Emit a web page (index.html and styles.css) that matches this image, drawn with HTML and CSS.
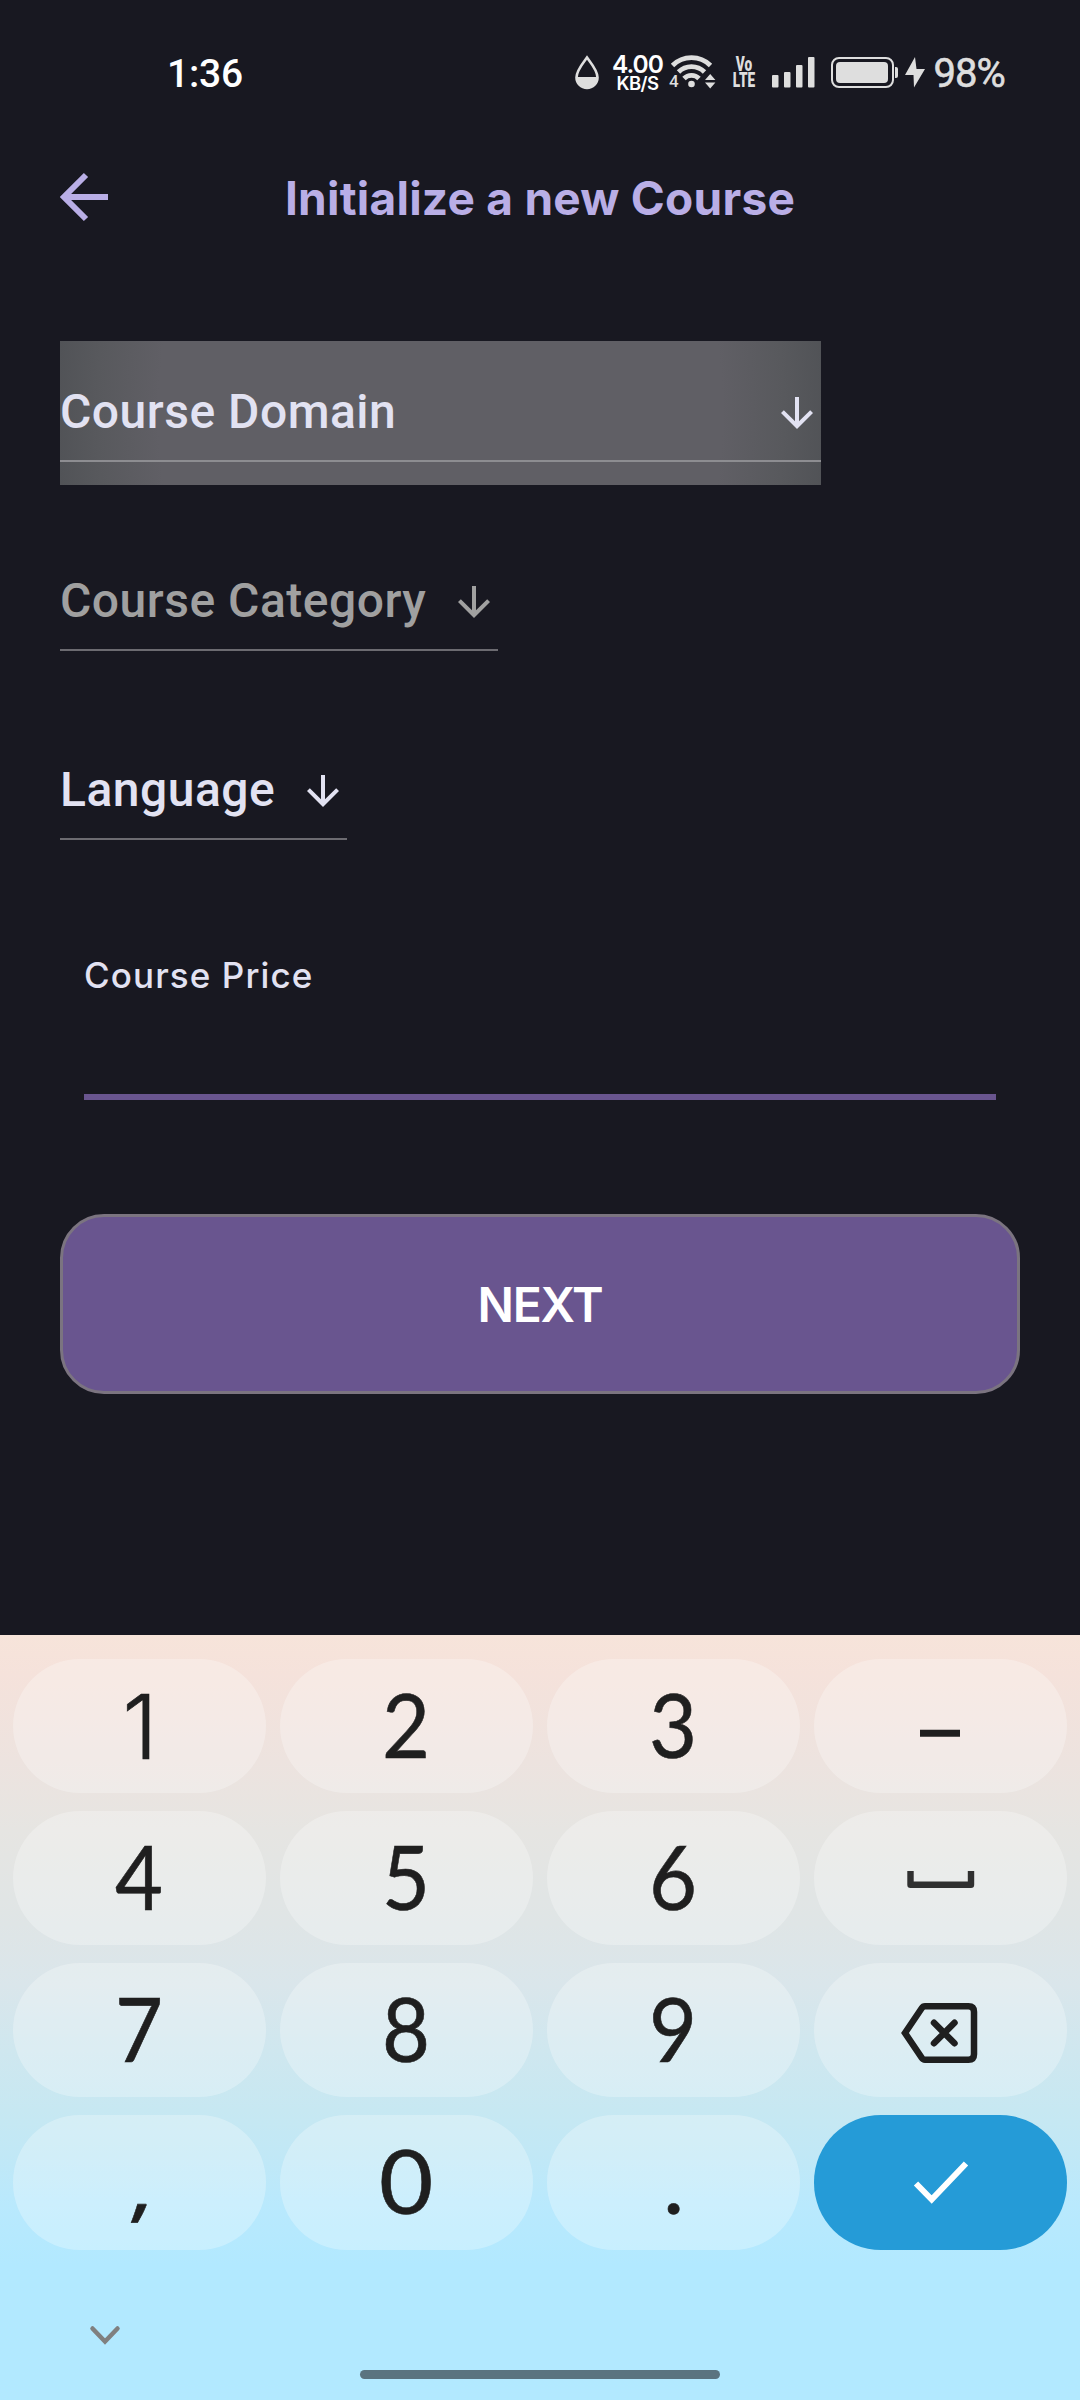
FILE: index.html
```html
<!DOCTYPE html>
<html lang="en">
<head>
<meta charset="utf-8">
<title>Initialize a new Course</title>
<link rel="stylesheet" href="styles.css">
</head>
<body>
<div class="screen">
  <header class="status">
    <span class="time">1:36</span>
    <div class="indicators">
      <svg class="drop" width="26" height="35" viewBox="0 0 26 35"><path d="M13 2.5C10 7 2.5 15 2.5 22.5a10.500 10.500 0 0 0 21 0C23.500 15 16 7 13 2.500z" fill="none" stroke="#dedede" stroke-width="2.600"/><path d="M2 22h22a11 11 0 0 1-22 0z" fill="#dedede"/></svg>
      <div class="speed"><span class="rate">4.00</span><span class="unit">KB/S</span></div>
      <svg class="wifi" width="48" height="36" viewBox="0 0 48 36"><g fill="none" stroke="#dedede" stroke-width="4.800"><path d="M3.500 12.500a27 27 0 0 1 38 0"/><path d="M9.500 19a18.500 18.500 0 0 1 26 0"/><path d="M15 25.500a10.500 10.500 0 0 1 15 0"/></g><circle cx="22.500" cy="31" r="3.300" fill="#dedede"/><path d="M36 27l5.200-6 5.200 6zM36 29.500h10.400l-5.200 6z" fill="#dedede"/><text class="wifi-gen" x="0" y="34">4</text></svg>
      <div class="volte"><span>Vo</span><span>LTE</span></div>
      <svg class="signal" width="44" height="31" viewBox="0 0 44 31" fill="#dedede"><rect x="0" y="18" width="6.500" height="12.500" rx="1"/><rect x="12" y="15" width="6.500" height="15.500" rx="1"/><rect x="24" y="8" width="6.500" height="22.500" rx="1"/><rect x="36" y="0" width="6.500" height="30.500" rx="1"/></svg>
      <svg class="battery" width="68" height="31" viewBox="0 0 68 31"><rect x="1" y="1" width="61" height="29" rx="7" fill="none" stroke="#dedede" stroke-width="2"/><rect x="5" y="5" width="52" height="21" rx="4" fill="#dedede"/><path d="M64 10h1q2 0 2 2v7q0 2-2 2h-1z" fill="#dedede"/></svg>
      <svg class="bolt" width="20" height="31" viewBox="0 0 20 31"><path d="M10 0L0 18h8.500L9 30.500 20 12h-8.500z" fill="#dedede"/></svg>
      <span class="percent">98%</span>
    </div>
  </header>

  <nav class="appbar">
    <svg class="back" width="48" height="48" viewBox="0 0 48 48"><path d="M26 2L4 24l22 22M4 24h44" fill="none" stroke="#b9aee6" stroke-width="6"/></svg>
    <h1 class="title">Initialize a new Course</h1>
  </nav>

  <main class="form">
    <div class="select focused"><span>Course Domain</span><svg width="48" height="48" viewBox="0 0 24 24"><path d="M20 12l-1.410-1.410L13 16.170V4h-2v12.170l-5.580-5.590L4 12l8 8 8-8z" fill="currentColor"/></svg></div>
    <div class="select disabled"><span>Course Category</span><svg width="48" height="48" viewBox="0 0 24 24"><path d="M20 12l-1.410-1.410L13 16.170V4h-2v12.170l-5.580-5.590L4 12l8 8 8-8z" fill="currentColor"/></svg></div>
    <div class="select"><span>Language</span><svg width="48" height="48" viewBox="0 0 24 24"><path d="M20 12l-1.410-1.410L13 16.170V4h-2v12.170l-5.580-5.590L4 12l8 8 8-8z" fill="currentColor"/></svg></div>
    <div class="price"><span>Course Price</span></div>
    <button class="next">NEXT</button>
  </main>

  <section class="keyboard">
    <div class="keys">
      <div class="key"><span class="one">1</span></div><div class="key"><span>2</span></div><div class="key"><span>3</span></div>
      <div class="key"><svg width="76" height="60" viewBox="0 0 76 60"><path d="M17 37.300h40" stroke="#1f1f1f" stroke-width="7"/></svg></div>
      <div class="key"><span>4</span></div><div class="key"><span>5</span></div><div class="key"><span>6</span></div>
      <div class="key"><svg width="76" height="60" viewBox="0 0 76 60"><path d="M7.500 23v13.800h60.500V23" fill="none" stroke="#303030" stroke-width="6.400" stroke-linejoin="round"/></svg></div>
      <div class="key"><span>7</span></div><div class="key"><span>8</span></div><div class="key"><span>9</span></div>
      <div class="key"><svg width="76" height="60" viewBox="0 0 76 60" fill="none" stroke="#1f1f1f"><path d="M22 6.300H65.500q5.500 0 5.500 5.500v42.400q0 5.500-5.500 5.500H22q-2 0-3.300-2L2 33l16.700-24.700q1.300-2 3.300-2z" stroke-width="6.500"/><path d="M31 22.800l20.500 20.500M51.500 22.800L31 43.300" stroke-width="6.500" stroke-linecap="round"/></svg></div>
      <div class="key"><span class="comma">,</span></div><div class="key"><span class="zero">0</span></div><div class="key"><span class="dot">.</span></div>
      <div class="key enter"><svg width="76" height="60" viewBox="0 0 76 60"><path d="M13 30.500L28.700 46.500 63 10.500" fill="none" stroke="#fff" stroke-width="6"/></svg></div>
    </div>
    <div class="navrow">
      <svg class="hide" width="30" height="19" viewBox="0 0 30 19"><path d="M2.500 2.500L15 15.500 27.500 2.500" fill="none" stroke="#808080" stroke-width="4.500" stroke-linecap="round"/></svg>
    </div>
    <div class="home"></div>
  </section>
</div>
</body>
</html>
```
FILE: styles.css
```css
* { box-sizing: border-box; }
body { margin: 0; background: #181821; }
svg { display: block; flex: none; overflow: visible; }

.screen {
  width: 1080px;
  height: 2400px;
  display: flex;
  flex-direction: column;
  overflow: hidden;
  background: #181821;
  font-family: Roboto, sans-serif;
  color: #e2e2f2;
}

/* Status bar */
.status {
  height: 144px;
  padding: 53px 75px 0 167px;
  display: flex;
  justify-content: space-between;
  align-items: flex-start;
}
.time { padding-top: 1px; font-size: 39px; font-weight: 500; line-height: 40px; color: #fff; letter-spacing: -.2px; }
.indicators { display: flex; align-items: flex-start; color: #dedede; }
.drop { margin-top: 2px; }
.speed {
  width: 52px;
  height: 40px;
  margin-left: 11px;
  display: flex;
  flex-direction: column;
  align-items: center;
  font-family: Inter, sans-serif;
  font-weight: 600;
  color: #fff;
}
.rate { font-size: 24.500px; line-height: 23px; letter-spacing: -1px; }
.unit { font-size: 18.500px; line-height: 14px; letter-spacing: -.6px; }
.wifi { margin: 0 0 0 6px; }
.wifi-gen { font: 500 17px Roboto, sans-serif; fill: #dedede; }
.volte {
  width: 24px;
  margin: 4px 0 0 15px;
  display: flex;
  flex-direction: column;
  align-items: center;
  font: 900 19.500px/16px "Roboto", sans-serif;
  transform: scaleX(.7);
}
.signal { margin: 4px 0 0 16px; }
.battery { margin: 4px 0 0 15px; }
.bolt { margin: 4px 0 0 6px; }
.percent { margin-left: 8px; padding-top: 1px; font-size: 40px; line-height: 40px; letter-spacing: -.9px; -webkit-text-stroke: .6px #dedede; }

/* App bar */
.appbar {
  height: 197px;
  padding: 24px 60px 0;
  display: grid;
  grid-template-columns: 48px 1fr 48px;
  align-items: start;
}
.back { margin-top: 5px; }
.title {
  margin: 0;
  text-align: center;
  font: 700 46px/61px Inter, sans-serif;
  letter-spacing: .25px;
  color: #b9aee6;
  white-space: nowrap;
}

/* Form */
.form {
  height: 1294px;
  padding: 0 60px;
  display: flex;
  flex-direction: column;
  align-items: flex-start;
}
.select {
  height: 144px;
  margin-bottom: 45px;
  display: flex;
  align-items: center;
  gap: 24px;
  font-size: 48px;
  font-weight: 500;
  line-height: 56px;
  letter-spacing: .5px;
  white-space: nowrap;
  background: linear-gradient(#6c6b71, #6c6b71) 0 119px / 100% 2px no-repeat;
}
.select span { padding-bottom: 3px; }
.select.focused {
  width: 761px;
  justify-content: space-between;
  background:
    linear-gradient(#8d8d91, #8d8d91) 0 119px / 100% 2px no-repeat,
    radial-gradient(ellipse 440px 600px at 50% 50%, #605f65 64%, #58595d 78%, #4f5155 90%);
}
.select.disabled { color: #a0a0a0; }
.price {
  width: 912px;
  height: 192px;
  margin-left: 24px;
  padding-top: 44px;
  border-bottom: 6px solid #69558f;
  font: 500 35px/46px Inter, sans-serif;
  letter-spacing: 1.100px;
}
.next {
  width: 960px;
  height: 180px;
  margin: 114px 0 0;
  padding: 2px 0 0;
  border: 3px solid #7b7480;
  border-radius: 44px;
  background: #69558f;
  color: #fff;
  font: 600 48px/58px Inter, sans-serif;
  letter-spacing: -1.200px;
}

/* Keyboard */
.keyboard {
  height: 765px;
  padding: 24px 13px 0;
  display: flex;
  flex-direction: column;
  background: linear-gradient(#f7e4da 0, #f5e2db 40px, #ede3df 125px, #e6e5e2 195px, #dfe5e6 290px, #dae6eb 350px, #cfe7ef 415px, #c7e8f2 475px, #c1e8f6 520px, #b9e9fd 570px, #b2e9ff 630px, #b2e9ff 765px);
}
.keys {
  display: grid;
  grid-template-columns: repeat(4, 253px);
  grid-template-rows: 134px 134px 134px 135px;
  gap: 18px 14px;
}
.key {
  display: flex;
  align-items: center;
  justify-content: center;
  border-radius: 67px;
  background: rgba(255, 255, 255, .27);
  font: 400 90px/134px Lato, sans-serif;
  color: #1f1f1f;
}
.key span {
  display: block;
  padding-bottom: 7px;
  transform: scaleX(.92);
  -webkit-text-stroke: .6px #1f1f1f;
}
.key .one { padding: 1px 0 0 1px; transform: none; font-family: Inter, sans-serif; font-weight: 300; }
.key .zero { transform: scaleX(1.04); }
.key .dot { transform: none; }
.key .comma { padding: 2px 0 0 10px; font: 600 76px/120px "Open Sans", sans-serif; transform: skewX(-8deg); }
.enter { background: #259bd7; }
.navrow { height: 120px; padding: 76px 77px 0; }
.home {
  width: 360px;
  height: 9px;
  margin: 0 auto;
  border-radius: 5px;
  background: #5b7480;
}
```
